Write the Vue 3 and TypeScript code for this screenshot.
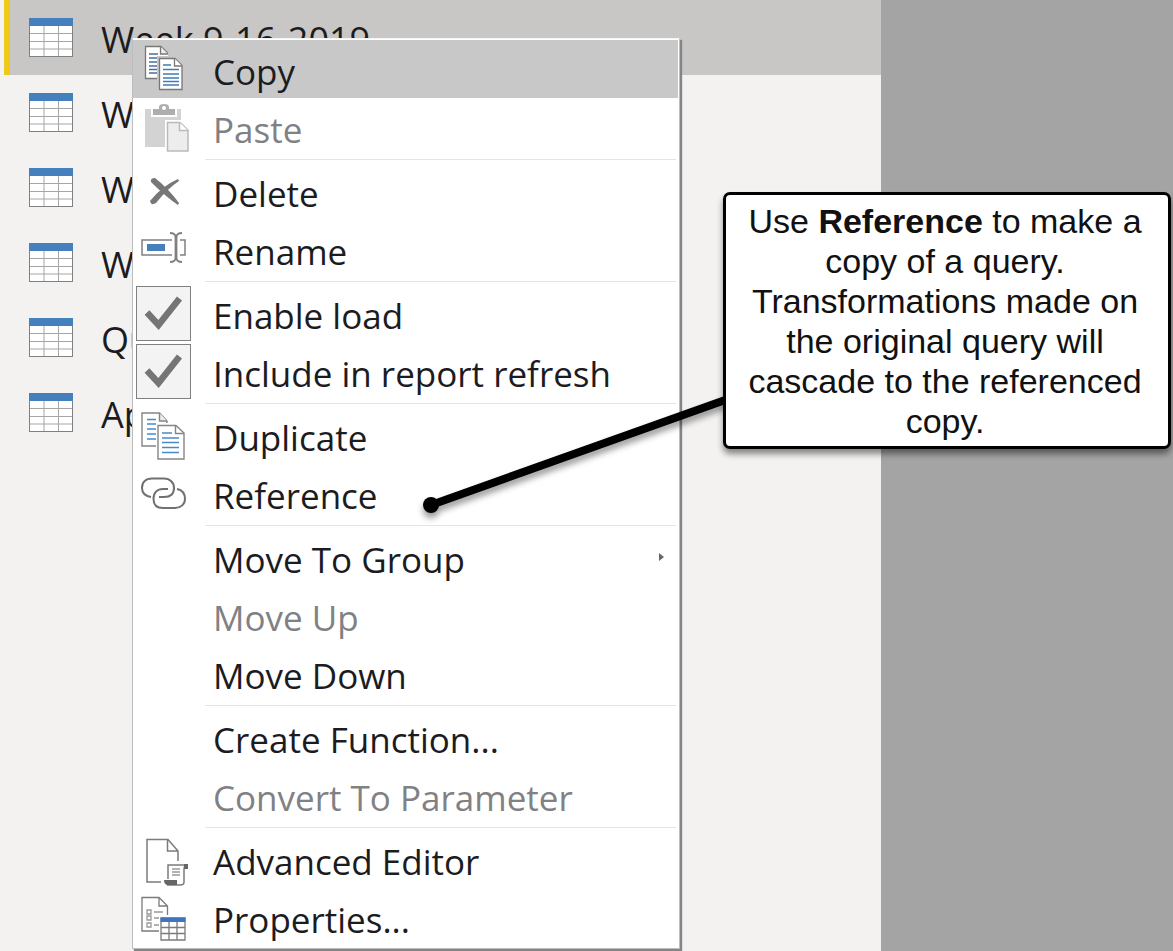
<script setup lang="ts">
import { ref } from 'vue'

interface MenuEntry {
  label: string
  icon?: string
  disabled?: boolean
  submenu?: boolean
  check?: 'load' | 'refresh'
}

const queries: string[] = ['Week 9-16-2019', 'W', 'W', 'W', 'Qu', 'Ap']
const selected = ref(0)
const active = ref('Copy')
const checks = ref({ load: true, refresh: true })

const groups: MenuEntry[][] = [
  [
    { label: 'Copy', icon: 'copy' },
    { label: 'Paste', icon: 'paste', disabled: true },
  ],
  [
    { label: 'Delete', icon: 'delete' },
    { label: 'Rename', icon: 'rename' },
  ],
  [
    { label: 'Enable load', check: 'load' },
    { label: 'Include in report refresh', check: 'refresh' },
  ],
  [
    { label: 'Duplicate', icon: 'duplicate' },
    { label: 'Reference', icon: 'reference' },
  ],
  [
    { label: 'Move To Group', submenu: true },
    { label: 'Move Up', disabled: true },
    { label: 'Move Down' },
  ],
  [
    { label: 'Create Function...' },
    { label: 'Convert To Parameter', disabled: true },
  ],
  [
    { label: 'Advanced Editor', icon: 'editor' },
    { label: 'Properties...', icon: 'properties' },
  ],
]
</script>

<template>
  <main class="workspace">
    <nav class="queries">
      <button
        v-for="(name, i) in queries"
        :key="i"
        type="button"
        class="query"
        :class="{ selected: selected === i }"
        @click="selected = i"
      >
        <svg class="table-icon" viewBox="0 0 44 39" aria-hidden="true">
          <rect x="0.5" y="0.5" width="43" height="38" fill="#fff" stroke="#808080" />
          <path d="M1 15.5H43M1 23.5H43M1 31H43M15 8V38M29.500 8V38" stroke="#a6a6a6" fill="none" />
          <rect width="44" height="8" fill="#4580bd" />
        </svg>
        <span class="text">{{ name }}</span>
      </button>
    </nav>

    <div class="menu">
      <div v-for="(group, g) in groups" :key="g" class="group">
        <template v-for="entry in group" :key="entry.label">
          <label v-if="entry.check" class="item">
            <span class="checkbox">
              <input v-model="checks[entry.check]" type="checkbox" />
              <svg v-if="checks[entry.check]" viewBox="0 0 55 55" aria-hidden="true">
                <path d="M11 26.500L22.500 39L43.500 12.500" fill="none" stroke="#757575" stroke-width="6.500" />
              </svg>
            </span>
            <span class="text">{{ entry.label }}</span>
          </label>
          <button
            v-else
            type="button"
            class="item"
            :class="{ active: active === entry.label }"
            :disabled="entry.disabled"
            @mouseenter="active = entry.label"
          >
            <svg class="icon" viewBox="0 0 56 56" aria-hidden="true">
              <g v-if="entry.icon === 'copy'" stroke-width="1.300">
                <path d="M9.500 5.500H25L32 12.500V15H21V37.500H9.500Z" fill="#fff" />
                <path d="M21 37.500H9.500V5.500H25L32 12.500" fill="none" stroke="#777" />
                <path d="M24.500 5.500V13H32" fill="#eee" stroke="#777" />
                <path d="M13 13H22M13 17H21M13 21H21M13 25H21M13 28.500H21M13 32H21" stroke="#466f9d" />
                <path d="M23.500 17.500H39L46 24.500V48.500H23.500Z" fill="#fff" stroke="#777" />
                <path d="M38.500 17.500V25H46" fill="#fff" stroke="#777" />
                <path d="M27 24H35M27 28.500H43M27 33H43M27 37H43M27 40.500H43M27 44H43" stroke="#3f7cb8" />
              </g>
              <g v-else-if="entry.icon === 'duplicate'" stroke-width="1.400">
                <path d="M6 6H23.500L31 14V39H6Z" fill="#fff" stroke="#858585" />
                <path d="M23.500 6V14H31" fill="#eee" stroke="#858585" />
                <path d="M11 12.500H20M11 17H20M11 22H20M11 27H20M11 32H20" stroke="#4989c7" />
                <path d="M20 16H50V54H20Z" fill="#fff" />
                <path d="M22 18.500H40L48 26V52H22Z" fill="#fff" stroke="#858585" />
                <path d="M39.500 18.500V26.500H48" fill="none" stroke="#858585" />
                <path d="M26 26H36M26 31H43M26 35.500H43M26 40.500H43M26 45.500H43" stroke="#4989c7" />
              </g>
              <g v-else-if="entry.icon === 'paste'">
                <path d="M9 10H45V48H9Z" fill="#d3d3d3" />
                <path d="M15 9H41V18H15Z" fill="#fff" />
                <path d="M17 10H23V8Q23 5 28 5Q33 5 33 8V10H39V16H17Z" fill="#aeaeae" />
                <circle cx="28" cy="9" r="2" fill="#fff" />
                <path d="M29 21H54V55H29Z" fill="#fff" />
                <path d="M31.500 23.500H44L52 31V52H31.500Z" fill="#ededed" stroke="#bababa" stroke-width="1.500" />
                <path d="M43.500 23.500V31.500H52" fill="#fff" stroke="#bababa" stroke-width="1.500" />
              </g>
              <g v-else-if="entry.icon === 'delete'" fill="#777">
                <path d="M15 19Q14 15 19 15Q32 25 43 40L42 42Q30 34 15 19Z" />
                <path d="M42 16L43 18Q31 26 20 40Q15 43 14 38Q26 23 42 16Z" />
              </g>
              <g v-else-if="entry.icon === 'rename'" fill="none" stroke="#808080" stroke-width="1.500">
                <path d="M36 19H6V34H36M44 19H49V34H44" />
                <path d="M11 23H29V30H11Z" fill="#4580bd" stroke="none" />
                <path d="M40 15V38" stroke-width="2.800" />
                <path d="M34 12Q39 12 40 16Q41 12 46 12M34 41Q39 41 40 37Q41 41 46 41" stroke-width="2" />
              </g>
              <g v-else-if="entry.icon === 'reference'" fill="none" stroke="#707070" stroke-width="2">
                <path d="M15 32C9 31 6 28 6 23C6 17 10 13.500 16 13.500H28C34 13.500 38 17.500 38 23C38 29 34 32 28 32H23" />
                <path d="M32 24H27C21 24 17.500 28 17.500 34C17.500 40 21 43 27 43H39C45 43 49 39 49 34C49 28.500 46 25 41 24" />
              </g>
              <g v-else-if="entry.icon === 'editor'" fill="none" stroke="#7b7b7b" stroke-width="1.500">
                <path d="M25 51H11V8.500H32L42 20V30M31.500 8.500V20H42" />
                <path d="M32 48V34H50Q48 35 48 38V51Q48 54 44 54H31" fill="#fff" />
                <path d="M48 33H52V38H48Z" fill="#666" stroke="none" />
                <path d="M28 49H41V54H31Q28 53 28 49Z" fill="#666" stroke="none" />
                <path d="M36 38H44M36 41H44M36 44H44" stroke="#999" />
              </g>
              <g v-else-if="entry.icon === 'properties'" fill="none" stroke="#7b7b7b" stroke-width="1.300">
                <path d="M23 42H6V8.500H23L31.500 17V26M23 8.500V17H31.500" />
                <path d="M11 21H15V25H11ZM11 27H15V31H11ZM11 34H15V38H11Z" stroke="#999" />
                <path d="M18 23H27M18 29H23M18 36H23" stroke="#999" />
                <path d="M25 29H49V51H25Z" fill="#fff" />
                <path d="M25 38.500H49M25 44.500H49M33 33V51M41 33V51" />
                <path d="M24.500 28.500H49.500V33H24.500Z" fill="#4074c0" stroke="none" />
              </g>
            </svg>
            <span class="text">{{ entry.label }}</span>
            <svg v-if="entry.submenu" class="arrow" viewBox="0 0 6 10" aria-hidden="true">
              <path d="M0 1L5 5L0 9Z" fill="#666" />
            </svg>
          </button>
        </template>
      </div>
    </div>

    <svg class="connector" viewBox="0 0 320 140" aria-hidden="true">
      <path d="M21 115L318 9" stroke="#000" stroke-width="8" />
      <circle cx="21" cy="115" r="8" />
    </svg>

    <aside class="callout">
      Use <strong>Reference</strong> to make a copy of a query. Transformations made on the original query will cascade to the referenced copy.
    </aside>
  </main>
</template>

<style>
body {
  margin: 0;
}
</style>

<style scoped>
.workspace {
  position: relative;
  display: flex;
  min-height: 100vh;
  overflow: hidden;
  background: #a4a4a4;
  color: #1c1c1f;
  font-family: "Open Sans", "Noto Sans", sans-serif;
  font-size: 36px;
}

.queries {
  flex: 1;
  margin-right: 292px;
  background: #f3f2f1;
}

button {
  border: 0;
  background: none;
  color: inherit;
  font: inherit;
  text-align: left;
}

.query {
  display: flex;
  align-items: center;
  gap: 28px;
  width: 100%;
  height: 75px;
  padding: 0 0 0 25px;
  border-left: 4px solid #f3f2f1;
  line-height: 58px;
  white-space: nowrap;
}

.query.selected {
  background: linear-gradient(to right, #edc918 6px, #c8c7c5 6px);
}

.table-icon {
  flex: none;
  width: 44px;
  height: 39px;
}

.text {
  padding-top: 5px;
}

.menu {
  position: absolute;
  top: 38px;
  left: 132px;
  box-sizing: border-box;
  width: 548px;
  padding: 1px 1px 2px 0;
  border: 1px solid #bdbdbd;
  border-top-color: #f4f4f4;
  background: #fff;
  box-shadow: 2px 2px 1px #858585;
  font-size: 35px;
}

.group + .group::before {
  content: "";
  display: block;
  height: 1px;
  margin: 3px 2px 2px 72px;
  background: #e4e4e4;
}

.item {
  display: flex;
  align-items: center;
  gap: 21px;
  box-sizing: border-box;
  width: 100%;
  height: 58px;
  padding: 0 13px 0 3px;
  line-height: 58px;
  white-space: nowrap;
}

.item.active {
  background: #c8c8c8;
}

.item:disabled {
  color: #818184;
}

.icon {
  flex: none;
  width: 56px;
  height: 56px;
}

.checkbox {
  display: grid;
  flex: none;
  width: 55px;
  height: 55px;
  margin-right: 1px;
}

.checkbox > * {
  grid-area: 1 / 1;
  width: 100%;
  height: 100%;
}

.checkbox input {
  box-sizing: border-box;
  margin: 0;
  border: 1px solid #808080;
  background: #f3f3f3;
  appearance: none;
}

.checkbox svg {
  pointer-events: none;
}

.arrow {
  width: 6px;
  height: 10px;
  margin-left: auto;
}

.connector {
  position: absolute;
  top: 390px;
  left: 410px;
  width: 320px;
  height: 140px;
  filter: drop-shadow(0 5px 3px rgba(0, 0, 0, 0.4));
  pointer-events: none;
}

.callout {
  position: absolute;
  top: 192px;
  left: 723px;
  box-sizing: border-box;
  width: 448px;
  padding: 6px 22px 5px 18px;
  border: 3px solid #000;
  border-radius: 7px;
  background: #fff;
  box-shadow: 0 5px 6px rgba(0, 0, 0, 0.45);
  color: #111;
  font-family: "Liberation Sans", Arial, sans-serif;
  font-size: 34px;
  line-height: 40px;
  text-align: center;
}
</style>
